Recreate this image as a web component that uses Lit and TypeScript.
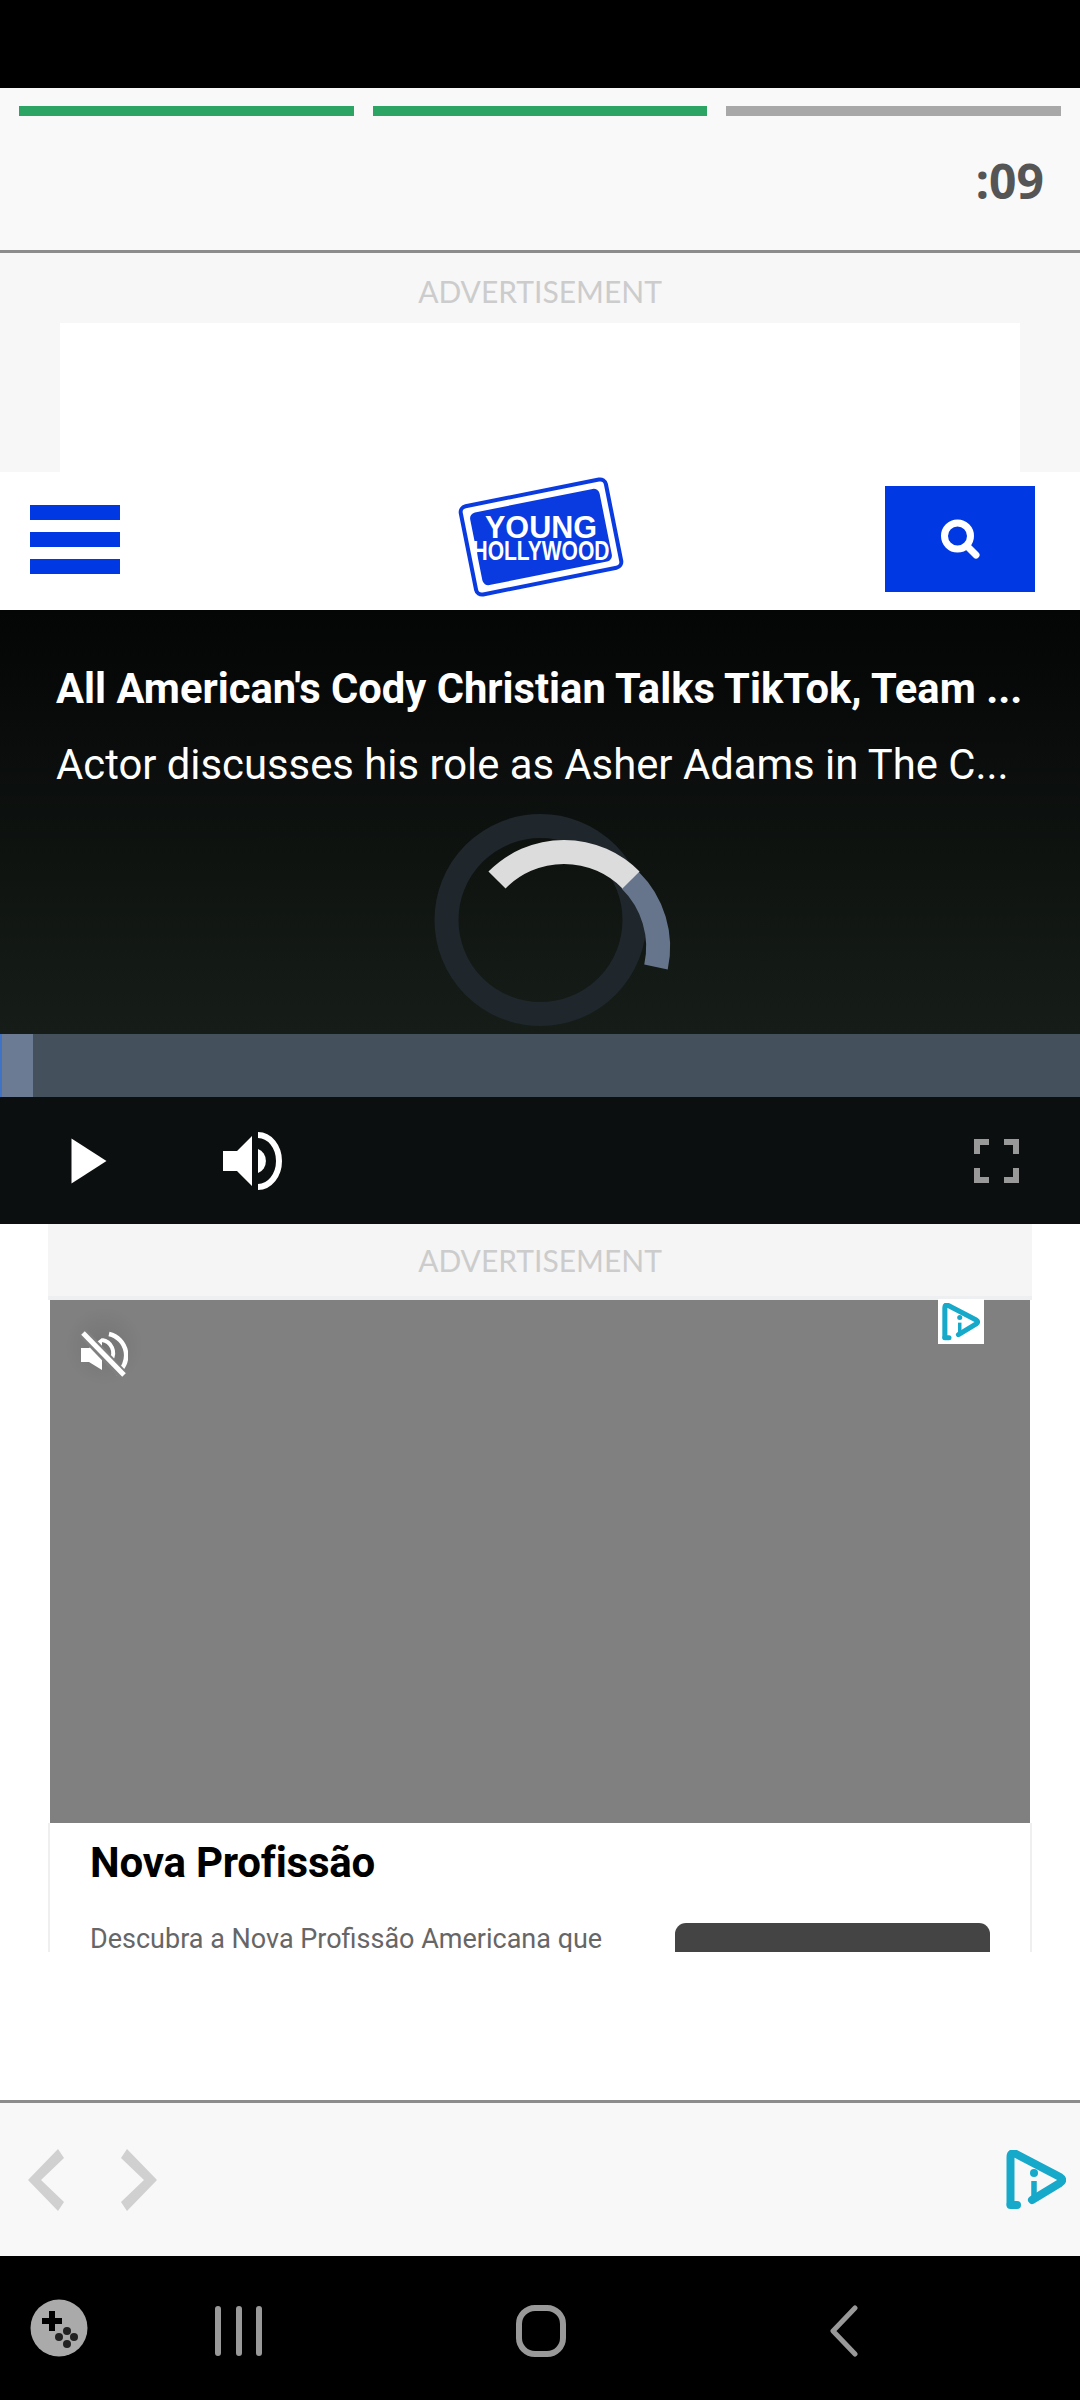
import { LitElement, html, css, svg } from "lit";
import { customElement } from "lit/decorators.js";

const adLogo = svg`<path d="M4.5 54 V7 Q4.5 1.5 10 4 L54 27 Q58.5 30 54 33 L26 50" fill="none" stroke="#17a9ca" stroke-width="8" stroke-linejoin="round" stroke-linecap="round"/><path d="M4.5 55 H11" fill="none" stroke="#17a9ca" stroke-width="8" stroke-linecap="round"/><circle cx="28" cy="23" r="4" fill="#17a9ca"/><path d="M28 31 V49" fill="none" stroke="#17a9ca" stroke-width="5.5"/>`;

@customElement("app-root")
export class AppRoot extends LitElement {
  static styles = css`
    :host { display: block; width: 1080px; height: 2400px; background: #fff; font-family: Roboto, "Liberation Sans", sans-serif; overflow: hidden; }
    svg { display: block; }
    .status { height: 88px; background: #000; }
    .story { height: 162px; background: #f9f9f9; padding: 18px 19px 0; box-sizing: border-box; }
    .bars { display: flex; gap: 19px; }
    .bar { flex: 1; height: 10px; background: #2ca564; }
    .bar.off { background: #a8a8a8; }
    .timer { margin-top: 35px; text-align: right; padding-right: 17px; font: 700 48px/60px "Open Sans", sans-serif; color: #555; }
    .rule { height: 3px; background: #8c8c8c; }
    .adtop { height: 219px; background: #f7f7f7; overflow: hidden; }
    .adlabel { font: 400 30px/36px Lato, sans-serif; color: #ccc; text-align: center; }
    .adtop .adlabel { padding-top: 20px; height: 50px; }
    .whitebox { height: 149px; margin: 0 60px; background: #fff; }
    .nav { height: 138px; background: #fff; display: flex; align-items: center; justify-content: space-between; padding: 0 45px 0 30px; box-sizing: border-box; position: relative; }
    .burger { width: 90px; display: flex; flex-direction: column; gap: 12px; margin-top: -3px; }
    .burger i { display: block; height: 15px; background: #0039e3; }
    .logo { position: absolute; left: 450px; top: 0; }
    .search { width: 150px; height: 106px; background: #0039e3; display: flex; align-items: center; justify-content: center; margin-top: -4px; }
    .player { height: 614px; background: #0c0f0f; display: flex; flex-direction: column; position: relative; }
    .stage { height: 424px; padding: 59px 0 0 56px; box-sizing: border-box; background: linear-gradient(#040505, #161d18); color: #fff; }
    .title { font-weight: 700; font-size: 41.7px; line-height: 40px; white-space: nowrap; }
    .sub { font-weight: 400; font-size: 41.8px; line-height: 40px; margin-top: 36px; white-space: nowrap; }
    .spinner { position: absolute; left: 420px; top: 190px; }
    .seek { height: 63px; background: #44505c; }
    .seek i { display: block; width: 31px; height: 100%; background: #6b7b94; border-left: 2px solid #3f74c4; }
    .controls { flex: 1; display: flex; align-items: center; padding: 0 61px 0 71px; }
    .controls .vol { margin-left: 114px; }
    .controls .fs { margin-left: auto; }
    .ad { margin: 0 48px; height: 728px; overflow: hidden; }
    .adhead { height: 72px; background: #f5f5f5; padding-top: 18px; box-sizing: border-box; }
    .adstrip { height: 4px; background: #eeeff1; }
    .video { height: 523px; margin: 0 2px; background: #808080; position: relative; }
    .glow { position: absolute; left: 14px; top: 6px; width: 80px; height: 80px; border-radius: 50%; background: radial-gradient(rgba(0,0,0,.09), rgba(0,0,0,0) 70%); }
    .mute { position: absolute; left: 30px; top: 30px; }
    .mini { position: absolute; left: 888px; top: -1px; width: 46px; height: 45px; background: #fff; display: flex; align-items: center; justify-content: center; }
    .card { height: 129px; border: solid #efefef; border-width: 0 2px; padding: 0 40px 0 40px; overflow: hidden; box-sizing: border-box; }
    .card h2 { margin: 17px 0 0; font-size: 42px; line-height: 46px; font-weight: 700; color: #000; letter-spacing: -0.2px; }
    .cardrow { display: flex; justify-content: space-between; margin-top: 37px; }
    .card p { margin: 0; font-size: 27px; line-height: 32px; color: #666; white-space: nowrap; }
    .btn { width: 315px; height: 60px; background: #444; border-radius: 11px; }
    .gap { height: 148px; background: #fff; }
    .foot { height: 153px; background: #f8f8f8; display: flex; align-items: center; padding: 0 14px 0 27px; box-sizing: border-box; }
    .foot .next { margin-left: 55px; }
    .foot .brand { margin-left: auto; }
    .sys { height: 144px; background: #000; position: relative; }
    .sys svg { position: absolute; }
  `;

  render() {
    return html`
      <div class="status"></div>
      <section class="story">
        <div class="bars"><div class="bar"></div><div class="bar"></div><div class="bar off"></div></div>
        <div class="timer">:09</div>
      </section>
      <div class="rule"></div>
      <section class="adtop">
        <div class="adlabel">ADVERTISEMENT</div>
        <div class="whitebox"></div>
      </section>
      <header class="nav">
        <div class="burger"><i></i><i></i><i></i></div>
        <svg class="logo" width="180" height="138" viewBox="450 472 180 138">
          <g transform="rotate(-11.3 541 537)">
            <rect x="467" y="492" width="148" height="90" rx="6" fill="#fff" stroke="#0a3be0" stroke-width="4"/>
            <rect x="475" y="500" width="132" height="74" rx="6" fill="#0a3be0"/>
          </g>
          <text x="541" y="538" text-anchor="middle" textLength="112" lengthAdjust="spacingAndGlyphs" font-family="Liberation Sans, sans-serif" font-weight="700" font-size="32" fill="#fff">YOUNG</text>
          <text x="541" y="560" text-anchor="middle" textLength="137" lengthAdjust="spacingAndGlyphs" font-family="Liberation Sans, sans-serif" font-weight="700" font-size="28" fill="#fff">HOLLYWOOD</text>
        </svg>
        <div class="search">
          <svg width="42" height="42" viewBox="0 0 42 42"><circle cx="18.5" cy="18" r="13" fill="none" stroke="#fff" stroke-width="7"/><path d="M28 28 L37 37" stroke="#fff" stroke-width="7" stroke-linecap="round"/></svg>
        </div>
      </header>
      <section class="player">
        <div class="stage">
          <div class="title">All American's Cody Christian Talks TikTok, Team ...</div>
          <div class="sub">Actor discusses his role as Asher Adams in The C...</div>
        </div>
        <svg class="spinner" width="260" height="240" viewBox="420 800 260 240">
          <circle cx="540.5" cy="920" r="94" fill="none" stroke="#1f272c" stroke-width="24"/>
          <path d="M630 880 A94 94 0 0 1 656 967" fill="none" stroke="#66758c" stroke-width="24"/>
          <path d="M497 880 A94 94 0 0 1 631 880" fill="none" stroke="#dcdcdc" stroke-width="24"/>
        </svg>
        <div class="seek"><i></i></div>
        <div class="controls">
          <svg width="36" height="46" viewBox="0 0 36 46"><path d="M0.5 0.5 L35.5 23 L0.5 45.5 Z" fill="#fff"/></svg>
          <svg class="vol" width="64" height="58" viewBox="0 0 64 58"><path d="M2 19 H16 L31 4 V54 L16 39 H2 Z" fill="#fff"/><path d="M37 17 A11 12.5 0 0 1 37 41 Z" fill="#fff"/><path d="M37 3 A21 26 0 0 1 37 55" fill="none" stroke="#fff" stroke-width="6"/></svg>
          <svg class="fs" width="45" height="44" viewBox="0 0 45 44" fill="none" stroke="#999" stroke-width="6"><path d="M3 15 V3 H15"/><path d="M30 3 H42 V15"/><path d="M3 29 V41 H15"/><path d="M30 41 H42 V29"/></svg>
        </div>
      </section>
      <section class="ad">
        <div class="adhead"><div class="adlabel">ADVERTISEMENT</div></div>
        <div class="adstrip"></div>
        <div class="video">
          <div class="glow"></div>
          <svg class="mute" width="48" height="48" viewBox="0 0 48 48">
            <path d="M1 18 H9 L22 8 V40 L9 32 H1 Z" fill="#fff"/>
            <path d="M29 4 A22 22 0 0 1 36 44" fill="none" stroke="#fff" stroke-width="4.5"/>
            <path d="M22 10 A13 13 0 0 1 31 30" fill="none" stroke="#fff" stroke-width="4"/>
            <path d="M2 2 L44 46" stroke="#808080" stroke-width="10"/>
            <path d="M3 3 L44 45" stroke="#fff" stroke-width="5"/>
          </svg>
          <div class="mini"><svg width="38" height="38" viewBox="0 0 60 60">${adLogo}</svg></div>
        </div>
        <div class="card">
          <h2>Nova Profissão</h2>
          <div class="cardrow">
            <p>Descubra a Nova Profissão Americana que</p>
            <div class="btn"></div>
          </div>
        </div>
      </section>
      <div class="gap"></div>
      <div class="rule"></div>
      <footer class="foot">
        <svg width="38" height="62" viewBox="0 0 38 62"><path d="M1 31 L31 0 L37 9 L14 31 L37 53 L31 62 Z" fill="#d0d0d0"/></svg>
        <svg class="next" width="38" height="62" viewBox="0 0 38 62"><path d="M37 31 L7 0 L1 9 L24 31 L1 53 L7 62 Z" fill="#d0d0d0"/></svg>
        <svg class="brand" width="60" height="60" viewBox="0 0 60 60">${adLogo}</svg>
      </footer>
      <nav class="sys">
        <svg style="left:30px;top:43px" width="58" height="58" viewBox="0 0 58 58"><circle cx="29" cy="29" r="28.5" fill="#aaa"/><path d="M22 12 V32 M12 22 H32" stroke="#000" stroke-width="6"/><circle cx="37" cy="32" r="4" fill="#222"/><circle cx="29" cy="38" r="4" fill="#222"/><circle cx="44" cy="38" r="4" fill="#222"/><circle cx="37" cy="45" r="4" fill="#222"/></svg>
        <svg style="left:214px;top:50px" width="50" height="50" viewBox="0 0 50 50" stroke="#999" stroke-width="6" stroke-linecap="round"><path d="M4 3 V47 M25 3 V47 M45 3 V47"/></svg>
        <svg style="left:515px;top:48px" width="52" height="54" viewBox="0 0 52 54"><rect x="4" y="4" width="44" height="46" rx="16" fill="none" stroke="#999" stroke-width="6"/></svg>
        <svg style="left:826px;top:49px" width="34" height="52" viewBox="0 0 34 52"><path d="M29 3 L7 26 L29 49" fill="none" stroke="#999" stroke-width="5" stroke-linecap="round" stroke-linejoin="round"/></svg>
      </nav>
    `;
  }
}
